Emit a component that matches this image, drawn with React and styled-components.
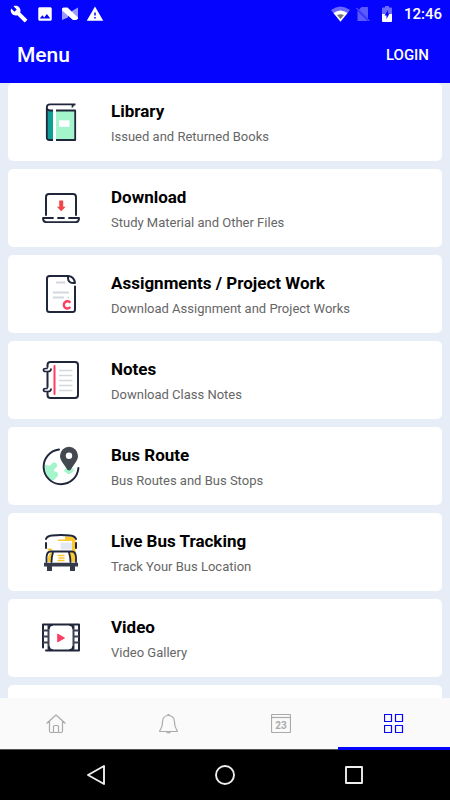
import React from 'react'
import styled, { createGlobalStyle } from 'styled-components'
import { MdBuild, MdImage, MdWarning } from 'react-icons/md'

const colors = {
  primary: '#0505ff',
  page: '#e6edf7',
  ink: '#20273a',
  mint: '#a5f5cc',
  teal: '#0d9f93',
  red: '#fb3f63',
  yellow: '#fdc72f',
  line: '#d3d7de',
};

const GlobalStyle = createGlobalStyle`
  * {
    box-sizing: border-box;
  }

  body {
    margin: 0;
    font-family: Roboto, 'Noto Sans', sans-serif;
    background: ${colors.page};
  }
`;

const Screen = styled.div`
  display: flex;
  flex-direction: column;
  height: 100vh;
  overflow: hidden;
`;

const Header = styled.header`
  flex: none;
  background: ${colors.primary};
  color: #fff;
`;

const StatusBar = styled.div`
  display: flex;
  align-items: center;
  justify-content: space-between;
  height: 27px;
  padding: 0 8px 0 10px;
`;

const StatusGroup = styled.div`
  display: flex;
  align-items: center;
  gap: ${props => props.$gap}px;

  svg {
    display: block;
  }
`;

const Clock = styled.time`
  font-size: 15px;
  line-height: 20px;
  font-weight: 500;
`;

const AppBar = styled.div`
  display: flex;
  align-items: center;
  justify-content: space-between;
  height: 56px;
  padding: 0 21px 0 17px;
`;

const Title = styled.h1`
  margin: 0;
  font-size: 21px;
  line-height: 28px;
  font-weight: 500;
`;

const LoginButton = styled.button`
  padding: 0;
  border: 0;
  background: none;
  color: inherit;
  font-family: inherit;
  font-size: 15px;
  line-height: 20px;
  font-weight: 500;
  cursor: pointer;
`;

const List = styled.ul`
  flex: 1;
  display: flex;
  flex-direction: column;
  gap: 8px;
  min-height: 0;
  margin: 0;
  padding: 0 8px;
  overflow-y: auto;
  scrollbar-width: none;
  list-style: none;
`;

const Card = styled.a`
  display: flex;
  align-items: center;
  gap: 30px;
  padding: 0 33px;
  border-radius: 5px;
  background: #fff;
  color: #000;
  text-decoration: none;
`;

const CardIcon = styled.svg`
  flex: none;
  width: 40px;
  height: 40px;
  fill: none;
  stroke: ${colors.ink};
  stroke-width: 2;
  stroke-linecap: round;
  stroke-linejoin: round;
`;

const CardText = styled.div`
  padding: 16px 0 14px;
`;

const CardTitle = styled.h2`
  margin: 0 0 4px;
  font-size: 17px;
  line-height: 24px;
  font-weight: 700;
`;

const CardSubtitle = styled.p`
  margin: 0;
  color: #666;
  font-size: 13px;
  line-height: 20px;
`;

// the next card is only peeking out from under the tab bar
const NextCard = styled.li`
  flex: none;
  height: 78px;
  border-radius: 5px;
  background: #fff;
`;

const TabBar = styled.nav`
  flex: none;
  display: flex;
  height: 52px;
  border-bottom: 1px solid #555;
  background: #fafafa;
`;

const Tab = styled.a`
  flex: 1;
  display: flex;
  align-items: center;
  justify-content: center;
  margin-bottom: -1px;
  color: ${props => props.$active ? colors.primary : '#aaa'};
  box-shadow: ${props => props.$active ? `inset 0 -3px ${colors.primary}` : 'none'};
`;

const TabIcon = styled.svg`
  width: 20px;
  height: 20px;
  fill: none;
  stroke: currentColor;
  stroke-width: 1.2;
  stroke-linejoin: round;
`;

const DayText = styled.text`
  fill: currentColor;
  stroke: none;
  font-size: 10px;
  font-weight: 700;
  text-anchor: middle;
`;

const SystemBar = styled.div`
  flex: none;
  display: flex;
  height: 50px;
  padding: 0 31px;
  background: #000;
`;

const SystemButton = styled.button`
  flex: 1;
  display: flex;
  align-items: center;
  justify-content: center;
  padding: 0;
  border: 0;
  background: none;

  svg {
    fill: none;
    stroke: #eee;
    stroke-width: 1.9;
    stroke-linejoin: round;
  }
`;

const BookIcon = () => (
  <CardIcon viewBox="0 0 40 40" aria-hidden="true">
    <path d="M6 8 8 9h4v29H8q-2 0-2-2z" fill={colors.teal} stroke="none" />
    <path d="M15 9h19v29H15z" fill={colors.mint} stroke="none" />
    <path d="M18 18.3h10.500v6.500H18z" fill="#fff" stroke="none" />
    <path d="M34.500 2.300H9Q5.800 2.300 5.800 5.500V35.500Q5.800 38 8.500 38H12M5.800 5.500Q6 8.500 9 8.500H12M15 8.500H34.200V38H15M34.500 2.300Q31 2.500 31.500 5.500" strokeWidth="1.800" strokeLinecap="butt" />
  </CardIcon>
);

const LaptopIcon = () => (
  <CardIcon viewBox="0 0 40 40" aria-hidden="true">
    <path d="M5 27V9Q5 6 8 6H32Q35 6 35 9V27" />
    <path d="M12 30H2V31Q2.500 34.200 5.500 34.200H34.500Q37.500 34.200 38 31V30H28M17 30h6" strokeWidth="1.800" />
    <path d="M18.200 12.500h4v6.200h2.500L20.200 23.300 15.800 18.700h2.400z" fill="#f04848" stroke="none" />
  </CardIcon>
);

const DocumentIcon = () => (
  <CardIcon viewBox="0 0 40 40" aria-hidden="true">
    <path d="M34 12.500V35.500Q34 38 31.500 38H8.500Q6 38 6 35.500V4.500Q6 2 8.500 2H27.500Q33 2.500 34 9Q27 9.500 27 4V2" />
    <path d="M15 8.500H24M12 18.500H28M12 23.500H23M26.500 23.500H28" stroke={colors.line} strokeLinecap="butt" />
    <path d="M29.300 28.700A3.600 3.600 0 1 0 29.300 33.100" stroke={colors.red} strokeWidth="2.400" strokeLinecap="butt" />
  </CardIcon>
);

const NotebookIcon = () => (
  <CardIcon viewBox="0 0 40 40" aria-hidden="true">
    <path d="M6.500 7V5Q6.500 2 9.500 2H34Q37 2 37 5V35Q37 38 34 38H9.500Q6.500 38 6.500 35V32.500M6.500 12.500V27" />
    <path d="M10 9Q10 11.500 7 11.500H4.500Q2.500 11.500 2.500 10T4.500 8.500H6M10 29Q10 31.500 7 31.500H4.500Q2.500 31.500 2.500 30T4.500 28.500H6" strokeWidth="1.700" />
    <path d="M13.500 6V34" stroke={colors.red} />
    <path d="M18 10.500H31.500M18 15.500H31.500M18 20.500H31.500M18 25.500H31.500M18 30.500H31.500" stroke={colors.line} strokeWidth="1.600" strokeLinecap="butt" />
  </CardIcon>
);

const GlobeIcon = () => (
  <CardIcon viewBox="0 0 40 40" aria-hidden="true">
    <path d="M4 18.500Q6 19.500 7.500 19.500Q9.500 20 10.500 18Q12.500 15 15.500 17.500Q17.500 20.500 14 22.500Q12 24 13.500 25.500Q17 25.500 17 28Q17.500 30.500 15 31.500Q14 34.500 10.500 34.500Q2.500 28 4 18.500z" fill={colors.mint} stroke="none" />
    <path d="M24.500 22.500Q21.500 25 25 26.500Q27.500 29.500 30 27Q33.500 25.500 32.500 22.500z" fill={colors.mint} stroke="none" />
    <path d="M18 3.500A17.400 17.400 0 1 0 37.400 22" />
    <path d="M28 24.500Q26.500 24.500 25.500 22.500C22.500 17.500 19 14.500 19 9.800A9 9 0 0 1 37 9.800C37 14.500 33.500 17.500 30.500 22.500Q29.500 24.500 28 24.500z" fill="#444850" stroke="none" />
    <circle cx="28" cy="9.800" r="3.200" fill="#fff" stroke="none" />
  </CardIcon>
);

const BusIcon = () => (
  <CardIcon viewBox="0 0 40 40" aria-hidden="true">
    <path d="M24 4.500H31Q34.500 5 34.500 8V30H30.500L28 19H31V9H17V7.500H24z" fill={colors.yellow} stroke="none" />
    <path d="M9.500 20.500H12L10 30H6.500Q6.500 24 9.500 20.500zM6 16.500h5v2H7z" fill={colors.yellow} stroke="none" />
    <path d="M19.500 10.500H31v7H19.500z" fill="#e3e9f2" stroke="none" />
    <path d="M5 7Q6 4 11 3.500Q20 2.500 29 3.500Q34 4 35 7M5 11V16M35 11V16" />
    <path d="M5.500 30V25Q6 19.500 9.500 19.500H31Q34.500 19.500 35 25V30M12 20.500Q10.500 25 10.500 30M28 20.500Q29.500 25 29.500 30" strokeWidth="1.800" />
    <path d="M16.500 23.500H23.500M17.500 26H23.500M16.500 28.500H23.500" stroke={colors.yellow} strokeWidth="1.300" strokeLinecap="butt" />
    <path d="M3 30.800H37V34.500H34V39H29V34.500H11V39H6V34.500H3z" fill="#343a48" stroke="none" />
  </CardIcon>
);

const FilmIcon = () => (
  <CardIcon viewBox="0 0 40 40" aria-hidden="true">
    <path d="M2 29.500V6.500H38V32.500H5" />
    <path d="M7.500 7V32M32.500 7V32M2 12.500H7M2 18.500H7M2 24.500H7M33 12.500H38M33 18.500H38M33 24.500H38" stroke="#3d4352" strokeLinecap="butt" />
    <path d="M8 10Q8 7 11 7M29 7Q32 7 32 10M8 29Q8 32 11 32M29 32Q32 32 32 29" />
    <path d="M17 16.300 23.500 20 17 23.700z" fill={colors.red} stroke={colors.red} strokeWidth="1" />
  </CardIcon>
);

const HomeIcon = () => (
  <TabIcon viewBox="0 0 20 20" aria-hidden="true">
    <path d="M.5 9.500 10 1 19.500 9.500M3.500 7.500V17Q3.500 18.500 5 18.500H15Q16.500 18.500 16.500 17V7.500M7.500 18.500V12.500Q7.500 11.500 8.500 11.500H11.500Q12.500 11.500 12.500 12.500V18.500" />
  </TabIcon>
);

const BellIcon = () => (
  <TabIcon viewBox="0 0 20 20" aria-hidden="true">
    <path d="M9.500 1.500C5.500 1.500 3.500 4.500 3.500 8C3.500 12 3 13.500 1.500 15.500Q.5 16.500 .8 17.500H18.200Q18.500 16.500 17.500 15.500C16 13.500 15.500 12 15.500 8C15.500 4.500 13.500 1.500 9.500 1.500z" />
    <path d="M8.500.8Q9.500 0 10.500.8M7.500 18.300Q9.500 19.600 11.500 18.300" />
  </TabIcon>
);

const CalendarIcon = () => (
  <TabIcon viewBox="0 0 20 20" aria-hidden="true">
    <rect x=".5" y=".5" width="19" height="18" rx="1" />
    <path d="M.5 3.500H19.500" />
    <DayText x="10" y="15">23</DayText>
  </TabIcon>
);

const GridIcon = () => (
  <TabIcon viewBox="0 0 20 20" aria-hidden="true">
    <path d="M.5.5h7v7h-7zM11.500.5h7v7h-7zM.5 11.500h7v7h-7zM11.500 11.500h7v7h-7z" />
  </TabIcon>
);

const NougatIcon = () => (
  <svg width="16" height="16" viewBox="0 0 16 16" fill="#fff">
    <path d="M0 4 6 9V11.500L0 14zM10 5 16 1.500V12L10 7z" opacity=".6" />
    <path d="M0 2.500 1.500 1.500H5.500L16 11.500V12.500L14.500 14H11L0 4.500z" />
  </svg>
);

const WifiIcon = () => (
  <svg width="19" height="16" viewBox="0 0 19 16" fill="#fff">
    <path d="M0 4Q9.500-3 19 4L9.500 16z" opacity=".4" />
    <path d="M2.500 7Q9.500 2 16.500 7L9.500 15.500z" />
    <path d="M6 9Q9.500 7.500 13 9L9.500 13z" fill="#777" />
  </svg>
);

const NoSimIcon = () => (
  <svg width="14" height="16" viewBox="0 0 14 16">
    <path d="M5.500 1H12V12.500L3 3.500zM1.500 4.500 12 15H1.500z" fill="#5a5aff" />
    <path d="M.5 2 13.500 15" stroke="#7a7aff" />
  </svg>
);

const BatteryIcon = () => (
  <svg width="10" height="16" viewBox="0 0 10 16">
    <path d="M3 0H7V1.500H9Q10 1.500 10 2.500V8H0V2.500Q0 1.500 1 1.500H3z" fill="#6a6aff" />
    <path d="M0 8H10V15Q10 16 9 16H1Q0 16 0 15z" fill="#fff" />
    <path d="M6 4 2.500 9.500H4.500V13L7.500 7.500H6z" fill={colors.primary} />
  </svg>
);

const items = [
  { title: 'Library', subtitle: 'Issued and Returned Books', Icon: BookIcon },
  { title: 'Download', subtitle: 'Study Material and Other Files', Icon: LaptopIcon },
  { title: 'Assignments / Project Work', subtitle: 'Download Assignment and Project Works', Icon: DocumentIcon },
  { title: 'Notes', subtitle: 'Download Class Notes', Icon: NotebookIcon },
  { title: 'Bus Route', subtitle: 'Bus Routes and Bus Stops', Icon: GlobeIcon },
  { title: 'Live Bus Tracking', subtitle: 'Track Your Bus Location', Icon: BusIcon },
  { title: 'Video', subtitle: 'Video Gallery', Icon: FilmIcon },
];

const App = () => (
  <Screen>
    <GlobalStyle />

    <Header>
      <StatusBar>
        <StatusGroup $gap={8}>
          <MdBuild size={18} />
          <MdImage size={18} />
          <NougatIcon />
          <MdWarning size={18} />
        </StatusGroup>
        <StatusGroup $gap={12}>
          <StatusGroup $gap={6}>
            <WifiIcon />
            <NoSimIcon />
          </StatusGroup>
          <BatteryIcon />
          <Clock>12:46</Clock>
        </StatusGroup>
      </StatusBar>
      <AppBar>
        <Title>Menu</Title>
        <LoginButton type="button">LOGIN</LoginButton>
      </AppBar>
    </Header>

    <List>
      {items.map(({ title, subtitle, Icon }) => (
        <li key={title}>
          <Card href="#">
            <Icon />
            <CardText>
              <CardTitle>{title}</CardTitle>
              <CardSubtitle>{subtitle}</CardSubtitle>
            </CardText>
          </Card>
        </li>
      ))}
      <NextCard />
    </List>

    <TabBar>
      <Tab href="#" aria-label="Home"><HomeIcon /></Tab>
      <Tab href="#" aria-label="Notifications"><BellIcon /></Tab>
      <Tab href="#" aria-label="Calendar"><CalendarIcon /></Tab>
      <Tab href="#" aria-label="Menu" $active><GridIcon /></Tab>
    </TabBar>

    <SystemBar>
      <SystemButton type="button" aria-label="Back">
        <svg width="20" height="20" viewBox="0 0 20 20"><path d="M18 1V19L2 10z" /></svg>
      </SystemButton>
      <SystemButton type="button" aria-label="Home screen">
        <svg width="20" height="20" viewBox="0 0 20 20"><circle cx="10" cy="10" r="9" /></svg>
      </SystemButton>
      <SystemButton type="button" aria-label="Recent apps">
        <svg width="20" height="20" viewBox="0 0 20 20"><path d="M2 2H18V18H2z" /></svg>
      </SystemButton>
    </SystemBar>
  </Screen>
)

export default App
